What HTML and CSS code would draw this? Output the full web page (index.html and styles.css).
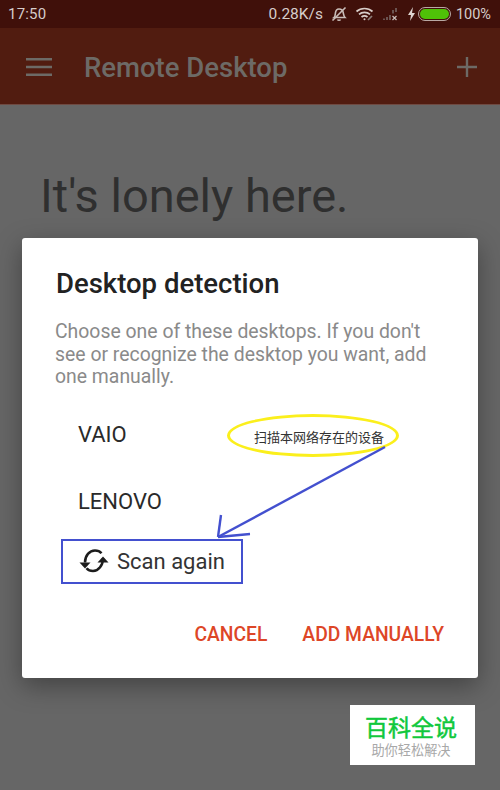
FILE: index.html
```html
<!DOCTYPE html>
<html lang="en">
<head>
<meta charset="utf-8">
<title>Remote Desktop</title>
<link rel="stylesheet" href="styles.css">
</head>
<body>
<div class="app">
  <div class="status">
    <span class="time">17:50</span>
    <div class="status-right">
      <span class="speed">0.28K/s</span>
      <svg class="si" width="18" height="18" viewBox="0 0 18 18" fill="none" stroke="#c9bdb9" stroke-width="1.6"><path d="M4 12.5c1.2-1 1.2-2.5 1.4-4.3C5.7 5.6 7 4 9 4s3.8 1.3 4.2 3.5c.4 2 .5 3.600 1.800 5H4z"/><path d="M7.500 14.500c.5 1 2.500 1 3 0"/><path d="M2.500 15.500 15.500 2.500"/></svg>
      <svg class="si" width="20" height="16" viewBox="0 0 20 16" fill="none" stroke="#d8ceca" stroke-width="1.700"><path d="M1.500 5.500c4.500-4 11.500-4 16 0"/><path d="M4 8.300c3-2.600 8-2.600 11 0"/><path d="M6.500 11c1.700-1.400 4.300-1.400 6 0"/><circle cx="9.500" cy="13.200" r="1" fill="#d8ceca" stroke="none"/><path d="m13 14 4-4" stroke="#8d7e79"/></svg>
      <svg class="si" width="16" height="14" viewBox="0 0 16 14"><path d="M1 13v-1.500h2V13zM4 13v-3h2v3zM7 13V8h2v5zM10 6.500h2V3h-2zM13 5h2V1h-2z" fill="#6b5350"/><path d="m10.500 9 4 4m0-4-4 4" stroke="#c9bdb9" stroke-width="1.200"/></svg>
      <svg class="bolt" width="9" height="14" viewBox="0 0 9 14"><path d="M6 0 1 8h3l-1 6 5-8H5z" fill="#ded5d1"/></svg>
      <div class="battery"><div class="charge"></div></div>
      <span class="pct">100%</span>
    </div>
  </div>
  <header class="toolbar">
    <svg class="menu" width="26" height="18" viewBox="0 0 26 18"><path d="M0 0h26v2.400H0zM0 7.800h26v2.400H0zM0 15.600h26V18H0z" fill="#6d6a66"/></svg>
    <h1 class="app-title">Remote Desktop</h1>
    <svg class="plus" width="20" height="20" viewBox="0 0 20 20"><path d="M8.800 0h2.400v20H8.800zM0 8.800h20v2.400H0z" fill="#6d6a66"/></svg>
  </header>
  <main class="content">
    <h2 class="lonely">It's lonely here.</h2>
  </main>

  <section class="dialog">
    <h3 class="dialog-title">Desktop detection</h3>
    <p class="dialog-text">Choose one of these desktops. If you don't see or recognize the desktop you want, add one manually.</p>
    <ul class="desktops">
      <li class="desktop">VAIO</li>
      <li class="desktop">LENOVO</li>
    </ul>
    <div class="scan">
      <svg width="30" height="28" viewBox="0 0 30 28" fill="none" stroke="#1c1c1c" stroke-width="2.500"><path d="M6 15.500C6 8.500 10.500 3.500 16 3.500c3 0 5 1 6.500 2.800"/><path d="M24 11c0 7.500-4.500 13-10 13-3 0-5-1-6.500-2.800"/><path d="M.5 15.500h11l-5.500 6z" fill="#1c1c1c" stroke="none"/><path d="M18.500 15.500h11l-5.500-6z" fill="#1c1c1c" stroke="none"/></svg>
      <span>Scan again</span>
    </div>
    <div class="actions">
      <button class="action">CANCEL</button>
      <button class="action">ADD MANUALLY</button>
    </div>
  </section>

  <div class="note"><span>扫描本网络存在的设备</span></div>
  <svg class="arrow" width="210" height="100" viewBox="0 0 210 100" fill="none" stroke="#4350cf" stroke-width="2.400"><path d="M205 6 38 96"/><path d="M38 96 41 74"/><path d="M38 96 70 93"/></svg>

  <aside class="mark">
    <div class="mark-main">百科全说</div>
    <div class="mark-sub">助你轻松解决</div>
  </aside>
</div>
</body>
</html>
```
FILE: styles.css
```css
* { box-sizing: border-box; }
html, body { margin: 0; padding: 0; }
body { font-family: Roboto, "Noto Sans CJK SC", sans-serif; background: #666; }
.app { position: relative; width: 500px; height: 790px; overflow: hidden; background: #666; display: flex; flex-direction: column; }

.status { height: 28px; flex: none; background: #40100a; color: #d6cdca; display: flex; align-items: center; justify-content: space-between; padding: 0 9px 0 8px; font-size: 15px; }
.time { font-size: 15px; letter-spacing: .2px; }
.status-right { display: flex; align-items: center; }
.speed { margin-right: 7px; font-size: 15.500px; }
.si { display: block; flex: none; margin-right: 7px; }
.bolt { display: block; flex: none; margin: 0 2px; }
.battery { width: 33px; height: 14px; border: 1.500px solid #b9a9a4; border-radius: 7px; padding: 1px; margin-right: 5px; }
.charge { height: 100%; background: #4fc108; border-radius: 5px; }
.pct { font-size: 14.500px; }

.toolbar { height: 77px; flex: none; background: #511c10; display: flex; align-items: center; padding: 2px 23px 0 26px; border-bottom: 1px solid #6f4a42; }
.menu { flex: none; margin-right: 32px; }
.app-title { flex: 1; margin: 0; font-size: 27.500px; font-weight: 500; color: #6d6a66; }
.plus { flex: none; }

.content { flex: 1; padding: 64px 40px 0; }
.lonely { margin: 0; font-size: 47px; font-weight: 400; line-height: 54px; color: #2f2f2f; }

.dialog { position: absolute; left: 22px; top: 238px; width: 456px; height: 440px; background: #fff; border-radius: 3px; box-shadow: 0 8px 26px rgba(0,0,0,.35); padding: 29px 34px 0; display: flex; flex-direction: column; }
.dialog-title { margin: 0; font-size: 27.500px; line-height: 34px; font-weight: 500; color: #222; }
.dialog-text { margin: 20px 0 0 -1px; font-size: 19.400px; line-height: 22.500px; color: #8a8a8a; }
.desktops { list-style: none; margin: 31px 0 0; padding: 0 0 0 22px; display: flex; flex-direction: column; gap: 37px; }
.desktop { font-size: 22px; line-height: 30px; color: #2a2a2a; }
.scan { width: 182px; height: 45px; margin: 22px 0 0 5px; padding-left: 16px; border: 2.500px solid #4350cf; display: flex; align-items: center; gap: 8px; font-size: 22px; color: #333; }
.actions { display: flex; justify-content: flex-end; gap: 35px; margin: 39px 0 0; }
.action { border: 0; padding: 0; background: none; font: 500 19.300px Roboto, sans-serif; color: #dd4627; }

.note { position: absolute; left: 227px; top: 414px; width: 172px; height: 43px; border: 3px solid #fbef1c; border-radius: 50%; display: flex; align-items: center; padding: 1px 0 0 24px; font-size: 13px; color: #333; white-space: nowrap; }
.arrow { position: absolute; left: 180px; top: 441px; }

.mark { position: absolute; left: 350px; top: 705px; width: 125px; height: 60px; background: #fff; text-align: center; padding: 11px 3px 0 0; }
.mark-main { font-size: 23px; line-height: 26px; font-weight: 400; color: #10c83c; -webkit-text-stroke: .5px #10c83c; }
.mark-sub { font-size: 13.200px; line-height: 17px; color: #a8a8a8; }
```
